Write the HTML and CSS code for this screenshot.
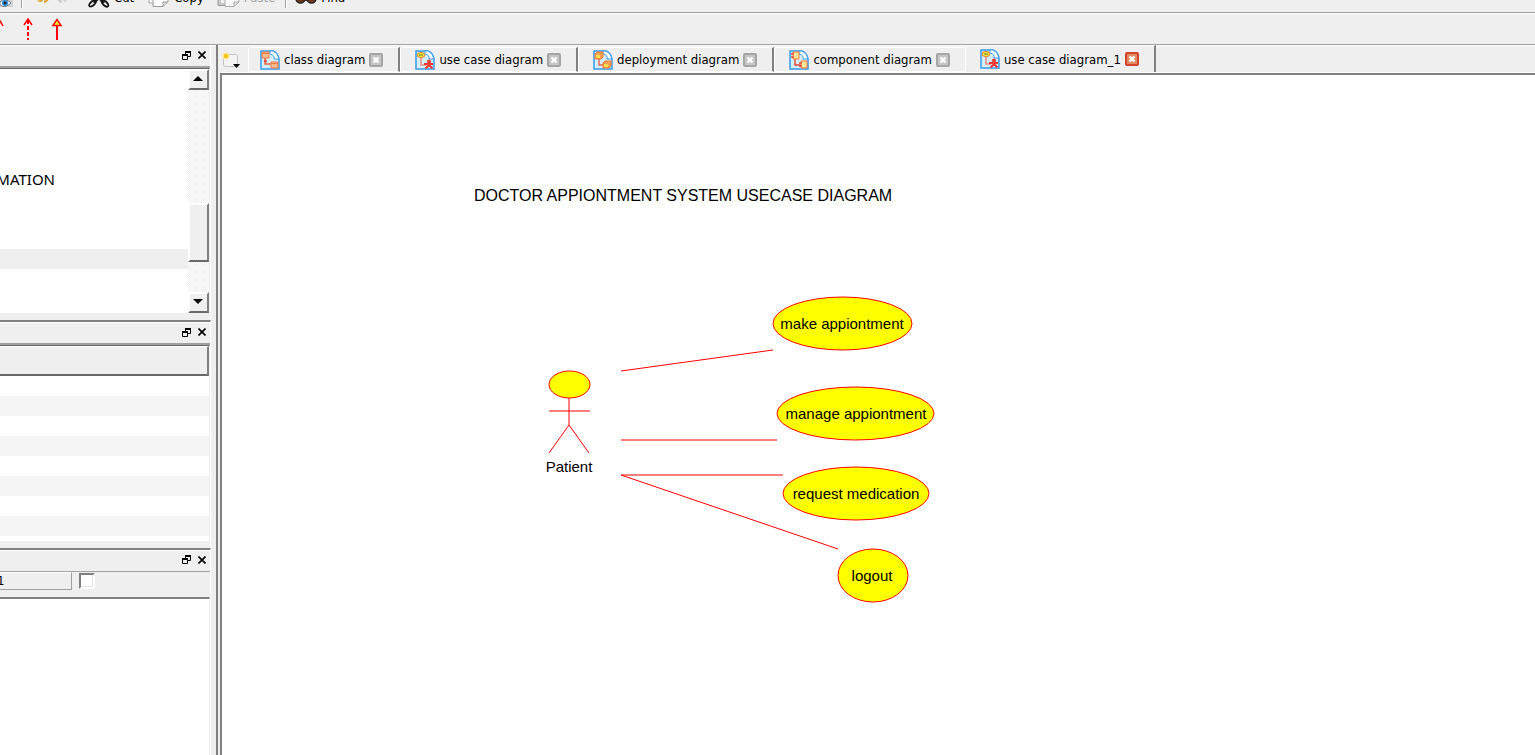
FILE: index.html
```html
<!DOCTYPE html>
<html lang="en">
<head>
<meta charset="utf-8">
<title>use case diagram_1</title>
<link rel="stylesheet" href="styles.css">
</head>
<body>
<svg class="defs" aria-hidden="true">
  <defs>
    <symbol id="page" viewBox="0 0 20 20">
      <path d="M1 1H13Q18 3 19 9V19H1Z" fill="#d4effc" stroke="#3a9be8" stroke-width="1.500"/>
      <path d="M10 1H13Q18 3 19 9H14Q15 5 10 4Z" fill="#fff" stroke="#3a9be8"/>
    </symbol>
    <symbol id="class" viewBox="0 0 20 20">
      <use href="#page"/>
      <path d="M5 8V14H11" fill="none" stroke="#e8683c" stroke-width="1.5"/>
      <path d="M2 2H9V8H2ZM11 12H18V18H11Z" fill="#f9bd8c" stroke="#ed7d4a"/>
      <path d="M2 3.5H9M11 13.5H18" stroke="#ed7d4a"/>
      <circle cx="5.500" cy="11" r="1.500" fill="#e8483c"/>
    </symbol>
    <symbol id="usecase" viewBox="0 0 20 20">
      <use href="#page"/>
      <path d="M6 7V15H11" fill="none" stroke="#f08a80" stroke-width="1.500"/>
      <ellipse cx="6" cy="5" rx="4" ry="2.600" fill="#f4e23a" stroke="#e08a3c"/>
      <path d="M4 5H8" stroke="#5a8a3c"/>
      <circle cx="14" cy="11.500" r="2" fill="#ef3a32"/>
      <path d="M9 14H18M14 12V15L10.500 18.500M14 15L17.500 18.500" fill="none" stroke="#ef3a32" stroke-width="2"/>
    </symbol>
    <symbol id="deploy" viewBox="0 0 20 20">
      <use href="#page"/>
      <path d="M6 8V15H11" fill="none" stroke="#e8685c" stroke-width="1.500"/>
      <path d="M2 4L4 2H10V7L8 9H2ZM10 13L12 11H18V16L16 18H10Z" fill="#f7a052" stroke="#ee7b30"/>
      <path d="M3 5H7V8H3ZM11 14H15V17H11Z" fill="#fbe04c"/>
    </symbol>
    <symbol id="component" viewBox="0 0 20 20">
      <use href="#page"/>
      <path d="M6 9V15H12" fill="none" stroke="#e8483c" stroke-width="1.500"/>
      <path d="M4 2H10V9H4ZM12 11H18V18H12Z" fill="#fde79a" stroke="#f07a3a"/>
      <path d="M2 4H5M2 7H5M10 13H13M10 16H13" stroke="#e8483c" stroke-width="1.500"/>
    </symbol>
    <symbol id="cross" viewBox="0 0 14 14">
      <rect x="1" y="1" width="12" height="12" rx="1" fill="currentColor" stroke="var(--edge)" stroke-width="2"/>
      <path d="M4.500 4.500L9.500 9.500M9.500 4.500L4.500 9.500" stroke="#fff" stroke-width="2.400"/>
    </symbol>
    <symbol id="float" viewBox="0 0 9 9">
      <path d="M3.500 4V.5M8.500 0V5.500H6M3 1H9M.5 4V8.500H5.500V4M0 4.500H6" fill="none" stroke="#000"/>
      <path d="M3 0H9V2H3ZM0 3H6V5H0Z"/>
    </symbol>
    <symbol id="close" viewBox="0 0 8 8">
      <path d="M.5 .5L7.500 7.500M7.500 .5L.5 7.500" stroke="#000" stroke-width="1.600"/>
    </symbol>
  </defs>
</svg>

<div class="app">
  <header class="toolbar main-tools">
    <button class="tool eye" aria-label="View"><svg width="14" height="22" viewBox="0 0 14 22"><path d="M0 10H9L13 15V21H0Z" fill="#d3d3d3"/><path d="M0 16Q5 11 11 17Q5 23 0 19Z" fill="#eef6fc" stroke="#6d7d8c"/><circle cx="5" cy="17" r="3" fill="#3382c4"/><circle cx="5" cy="17" r="1.300" fill="#123"/></svg></button>
    <span class="divider"></span>
    <button class="tool undo" aria-label="Undo"><svg width="14" height="22" viewBox="0 0 14 22"><path d="M0 11L5 16H1Z" fill="#e8bd55"/><path d="M2 12L5 15.500M7 16Q11 15 11 10" fill="none" stroke="#dba73a" stroke-width="2.500"/></svg></button>
    <button class="tool redo" aria-label="Redo" disabled><svg width="14" height="22" viewBox="0 0 14 22"><path d="M12 11L8 15M6 16Q2 15 2 10" fill="none" stroke="#ccc" stroke-width="2.500"/></svg></button>
    <button class="tool cut"><svg width="22" height="22" viewBox="0 0 22 22"><path d="M15 6L6 17M6 6L16 17" stroke="#222" stroke-width="3"/><ellipse cx="4.500" cy="17.500" rx="4" ry="2" transform="rotate(-42 4.500 17.500)" fill="none" stroke="#151515" stroke-width="1.800"/><ellipse cx="17" cy="17.500" rx="4" ry="2" transform="rotate(42 17 17.500)" fill="none" stroke="#151515" stroke-width="1.800"/></svg>Cut</button>
    <button class="tool copy"><svg width="22" height="22" viewBox="0 0 22 22"><path d="M1 3H14V17H1Z" fill="#fafafa" stroke="#aaa"/><path d="M5 6H20V16L15 20.500H5Z" fill="#fff" stroke="#999"/><path d="M15 20V16H20" fill="#ddd" stroke="#999"/></svg>Copy</button>
    <button class="tool paste" disabled><svg width="23" height="22" viewBox="0 0 23 22"><path d="M1 2H14V19.500H1Z" fill="#c8c8c8" stroke="#999"/><path d="M4 2H12V17H4Z" fill="#eee"/><path d="M8 6H22V16L17 20.500H8Z" fill="#f8f8f8" stroke="#aaa"/><path d="M17 20V16H22" fill="#ddd" stroke="#aaa"/></svg>Paste</button>
    <span class="divider"></span>
    <button class="tool find"><svg width="22" height="22" viewBox="0 0 22 22"><path d="M3 4H9V13H3ZM13 4H19V13H13ZM9 11H13V15H9Z" fill="#3c2a20"/><circle cx="5.500" cy="12.500" r="4.500" fill="#6d3a1d" stroke="#2c221e" stroke-width="1.500"/><circle cx="16.500" cy="12.500" r="4.500" fill="#6d3a1d" stroke="#2c221e" stroke-width="1.500"/></svg>Find</button>
  </header>

  <div class="toolbar arrows">
    <button class="arrow first" aria-label="Association"><svg width="12" height="22" viewBox="0 0 12 22"><path d="M6 1L10 8" stroke="red" stroke-width="1.500"/></svg></button>
    <button class="arrow" aria-label="Dependency"><svg width="12" height="22" viewBox="0 0 12 22"><path d="M2 7L6 1L10 7" fill="none" stroke="red" stroke-width="1.500"/><path d="M6 2V22" stroke="red" stroke-width="2" stroke-dasharray="4 2"/></svg></button>
    <button class="arrow" aria-label="Generalization"><svg width="12" height="22" viewBox="0 0 12 22"><path d="M6 8V22" stroke="red" stroke-width="2"/><path d="M2 7.500L6 1.500L10 7.500Z" fill="#ff3" stroke="red" stroke-width="1.500"/></svg></button>
  </div>

  <div class="workspace">
    <aside class="sidebar">
      <section class="dock">
        <div class="dock-title"><button class="mini" aria-label="Float"><svg width="9" height="9"><use href="#float"/></svg></button><button class="mini" aria-label="Close"><svg width="8" height="8"><use href="#close"/></svg></button></div>
        <div class="list-wrap">
          <ul class="tree">
            <li></li><li></li><li></li><li></li><li></li>
            <li><span class="tree-text">MATION</span></li>
            <li></li><li></li><li></li>
            <li class="current"></li>
          </ul>
          <div class="scrollbar">
            <button class="scroll-btn" aria-label="Scroll up"><svg width="10" height="5" viewBox="0 0 10 5"><path d="M0 5L5 0L10 5Z"/></svg></button>
            <div class="track upper"></div>
            <div class="thumb"></div>
            <div class="track"></div>
            <button class="scroll-btn" aria-label="Scroll down"><svg width="10" height="5" viewBox="0 0 10 5"><path d="M0 0H10L5 5Z"/></svg></button>
          </div>
        </div>
      </section>
      <section class="dock next">
        <div class="dock-title"><button class="mini" aria-label="Float"><svg width="9" height="9"><use href="#float"/></svg></button><button class="mini" aria-label="Close"><svg width="8" height="8"><use href="#close"/></svg></button></div>
        <div class="grid">
          <div class="grid-head"></div>
          <ul class="rows"><li></li><li></li><li></li><li></li><li></li><li></li><li></li><li></li></ul>
        </div>
      </section>
      <section class="dock next last">
        <div class="dock-title slim"><button class="mini" aria-label="Float"><svg width="9" height="9"><use href="#float"/></svg></button><button class="mini" aria-label="Close"><svg width="8" height="8"><use href="#close"/></svg></button></div>
        <div class="filter"><label class="field" for="show">1</label><input class="check" id="show" type="checkbox"></div>
        <div class="blank"></div>
      </section>
    </aside>

    <main class="editor">
      <nav class="tabs">
        <button class="new-tab" aria-label="New diagram"><svg width="20" height="18" viewBox="0 0 20 18"><rect x="1.500" y="2.500" width="14" height="12" rx="2" fill="#f4f4f4" stroke="#c4c4c4"/><circle cx="4" cy="4" r="3.500" fill="#ffe89a"/><circle cx="4" cy="4" r="2.300" fill="#f5c518"/><path d="M11 12H18L14.500 16Z"/></svg></button>
        <div class="tab"><button class="tab-name"><svg width="20" height="20"><use href="#class"/></svg>class diagram</button><button class="tab-close" aria-label="Close class diagram"><svg width="14" height="14"><use href="#cross"/></svg></button></div>
        <div class="tab"><button class="tab-name"><svg width="20" height="20"><use href="#usecase"/></svg>use case diagram</button><button class="tab-close" aria-label="Close use case diagram"><svg width="14" height="14"><use href="#cross"/></svg></button></div>
        <div class="tab"><button class="tab-name"><svg width="20" height="20"><use href="#deploy"/></svg>deployment diagram</button><button class="tab-close" aria-label="Close deployment diagram"><svg width="14" height="14"><use href="#cross"/></svg></button></div>
        <div class="tab before"><button class="tab-name"><svg width="20" height="20"><use href="#component"/></svg>component diagram</button><button class="tab-close" aria-label="Close component diagram"><svg width="14" height="14"><use href="#cross"/></svg></button></div>
        <div class="tab selected"><button class="tab-name"><svg width="20" height="20"><use href="#usecase"/></svg>use case diagram_1</button><button class="tab-close" aria-label="Close use case diagram_1"><svg width="14" height="14"><use href="#cross"/></svg></button></div>
      </nav>
      <div class="canvas">
        <svg class="diagram" width="760" height="560" viewBox="222 75 760 560">
          <text class="heading" x="474" y="201">DOCTOR APPIONTMENT SYSTEM USECASE DIAGRAM</text>
          <g class="link">
            <path d="M621 371L773 350M621 440H777M621 475H783M621 475L838 549"/>
            <path d="M569 398V425M549 411H590M549 453L569 425L589 453"/>
          </g>
          <g class="shape">
            <ellipse cx="569.500" cy="384.500" rx="20.500" ry="13.500"/>
            <ellipse cx="842.500" cy="323.500" rx="69.500" ry="26.500"/>
            <ellipse cx="855.500" cy="413.500" rx="78.500" ry="26.500"/>
            <ellipse cx="856" cy="493.500" rx="73" ry="26.500"/>
            <ellipse cx="873" cy="575.500" rx="35" ry="26.500"/>
          </g>
          <g class="caption">
            <text x="569" y="472">Patient</text>
            <text x="842" y="329">make appiontment</text>
            <text x="856" y="419">manage appiontment</text>
            <text x="856" y="499">request medication</text>
            <text x="872" y="581">logout</text>
          </g>
        </svg>
      </div>
    </main>
  </div>
</div>
</body>
</html>
```
FILE: styles.css
```css
* { box-sizing: border-box; }
body {
  margin: 0;
  background: #efefef;
  color: #000;
  font: 13px "DejaVu Sans Condensed", "Noto Sans", sans-serif;
}
button {
  margin: 0;
  padding: 0;
  border: 0;
  background: none;
  color: inherit;
  font: inherit;
}
ul { margin: 0; padding: 0; list-style: none; }
svg { display: block; flex: none; }
.defs { position: absolute; width: 0; height: 0; }
.app { display: flex; flex-direction: column; height: 100vh; overflow: hidden; }

.toolbar {
  display: flex;
  flex: none;
  border-bottom: 1px solid #a0a0a0;
  box-shadow: 0 1px #fff;
}
.main-tools { height: 13px; align-items: flex-end; padding-bottom: 4px; }
.tool { display: flex; height: 22px; gap: 4px; line-height: 24px; white-space: nowrap; }
.tool:disabled { color: #a0a0a0; }
.divider { width: 2px; height: 22px; border-left: 1px solid #a0a0a0; border-right: 1px solid #fff; }
.eye { margin-right: 7px; }
.undo { margin-left: 14px; }
.redo { margin-left: 5px; }
.cut { margin-left: 18px; }
.copy { margin-left: 14px; }
.paste { margin-left: 13px; }
.paste + .divider { margin-left: 10px; }
.find { margin-left: 8px; }
.arrows { height: 32px; align-items: center; gap: 17px; overflow: hidden; }
.first { margin-left: -7px; }

.workspace { display: flex; flex: 1; min-height: 0; }
.sidebar {
  display: flex;
  flex: none;
  flex-direction: column;
  width: 216px;
  padding-right: 5px;
}
.dock { flex: none; border-right: 1px solid #fff; }
.next { border-top: 2px solid #808080; }
.dock-title {
  display: flex;
  justify-content: flex-end;
  align-items: center;
  gap: 7px;
  height: 23px;
  padding: 0 4px 2px 0;
  border-top: 1px solid #fff;
  border-bottom: 2px solid #a0a0a0;
}
.slim { height: 22px; padding-bottom: 3px; border-bottom-width: 1px; }
.list-wrap {
  display: flex;
  height: 246px;
  border-top: 1px solid #696969;
  border-right: 1px solid #efefef;
  border-bottom: 1px solid #efefef;
  background: #fff;
}
.dock:first-child { padding-bottom: 6px; }
.tree { flex: 1; overflow: hidden; }
.tree li { height: 20px; }
.tree .current { background: #efefef; }
.tree-text {
  display: flex;
  justify-content: flex-end;
  width: 55px;
  font: 15px/20px "Noto Sans", sans-serif;
}
.scrollbar { display: flex; flex: none; flex-direction: column; width: 21px; }
.scroll-btn, .thumb {
  flex: none;
  border: 2px solid;
  border-color: #fff #808080 #696969 #fff;
  background: #efefef;
}
.scroll-btn { display: grid; place-items: center; height: 21px; padding: 0 2px 2px 0; }
.thumb { height: 59px; }
.track { flex: 1; background: repeating-conic-gradient(#efefef 0 25%, #fff 0 50%) 0 0 / 2px 2px; }
.upper { flex: none; height: 113px; }

.grid {
  height: 197px;
  border-top: 1px solid #696969;
  border-right: 1px solid #efefef;
  border-bottom: 1px solid #efefef;
  background: #fff;
}
.next:nth-child(2) { padding-bottom: 6px; }
.grid-head {
  height: 30px;
  border-top: 1px solid #fff;
  border-right: 2px solid #808080;
  border-bottom: 2px solid #696969;
  background: #efefef;
}
.rows li { height: 20px; }
.rows li:nth-child(even) { background: #f5f5f5; }
.last { display: flex; flex: 1; flex-direction: column; }
.filter { display: flex; gap: 7px; height: 25px; }
.field {
  width: 72px;
  height: 18px;
  border-top: 1px solid #fff;
  border-right: 1px solid #a0a0a0;
  border-bottom: 1px solid #a0a0a0;
  line-height: 16px;
  text-indent: -3px;
  overflow: hidden;
}
.check {
  appearance: none;
  width: 16px;
  height: 16px;
  margin: 1px 0 0;
  border: 2px solid;
  border-color: #808080 #fff #fff #808080;
  background: #fff;
  box-shadow: inset -1px -1px #e3e3e3;
}
.blank { flex: 1; border-top: 2px solid #808080; border-right: 1px solid #efefef; background: #fff; }

.editor {
  display: flex;
  flex: 1;
  flex-direction: column;
  min-width: 0;
  padding-left: 2px;
  border-left: 2px solid #808080;
}
.tabs { display: flex; flex: none; height: 28px; padding-top: 1px; box-shadow: inset 0 1px #fff; border-bottom: 1px solid #fff; }
.new-tab { width: 28px; padding: 4px 0 0 2px; }
.tab {
  display: flex;
  align-items: center;
  gap: 4px;
  height: 25px;
  margin-top: 1px;
  padding: 0 15px 0 14px;
  border: 1px solid #fff;
  border-right: 2px solid #808080;
  border-top-left-radius: 3px;
  white-space: nowrap;
}
.new-tab + .tab { padding-left: 11px; }
.before { border-right: 0; }
.selected { height: 27px; margin-top: -1px; border-bottom: 0; }
.tab-name { display: flex; align-items: center; gap: 4px; }
.tab-close { color: #c6c6c6; --edge: #a5a5a5; }
.selected .tab-close { color: #e08a62; --edge: #d2452c; }
.canvas {
  flex: 1;
  min-height: 0;
  overflow: hidden;
  border-top: 2px solid #808080;
  border-left: 2px solid #808080;
  background: #fff;
}
.heading { font: 16px "Liberation Sans", sans-serif; }
.caption { font: 15px "Liberation Sans", sans-serif; text-anchor: middle; }
.link { fill: none; stroke: red; }
.shape { fill: #ff0; stroke: red; }
```
